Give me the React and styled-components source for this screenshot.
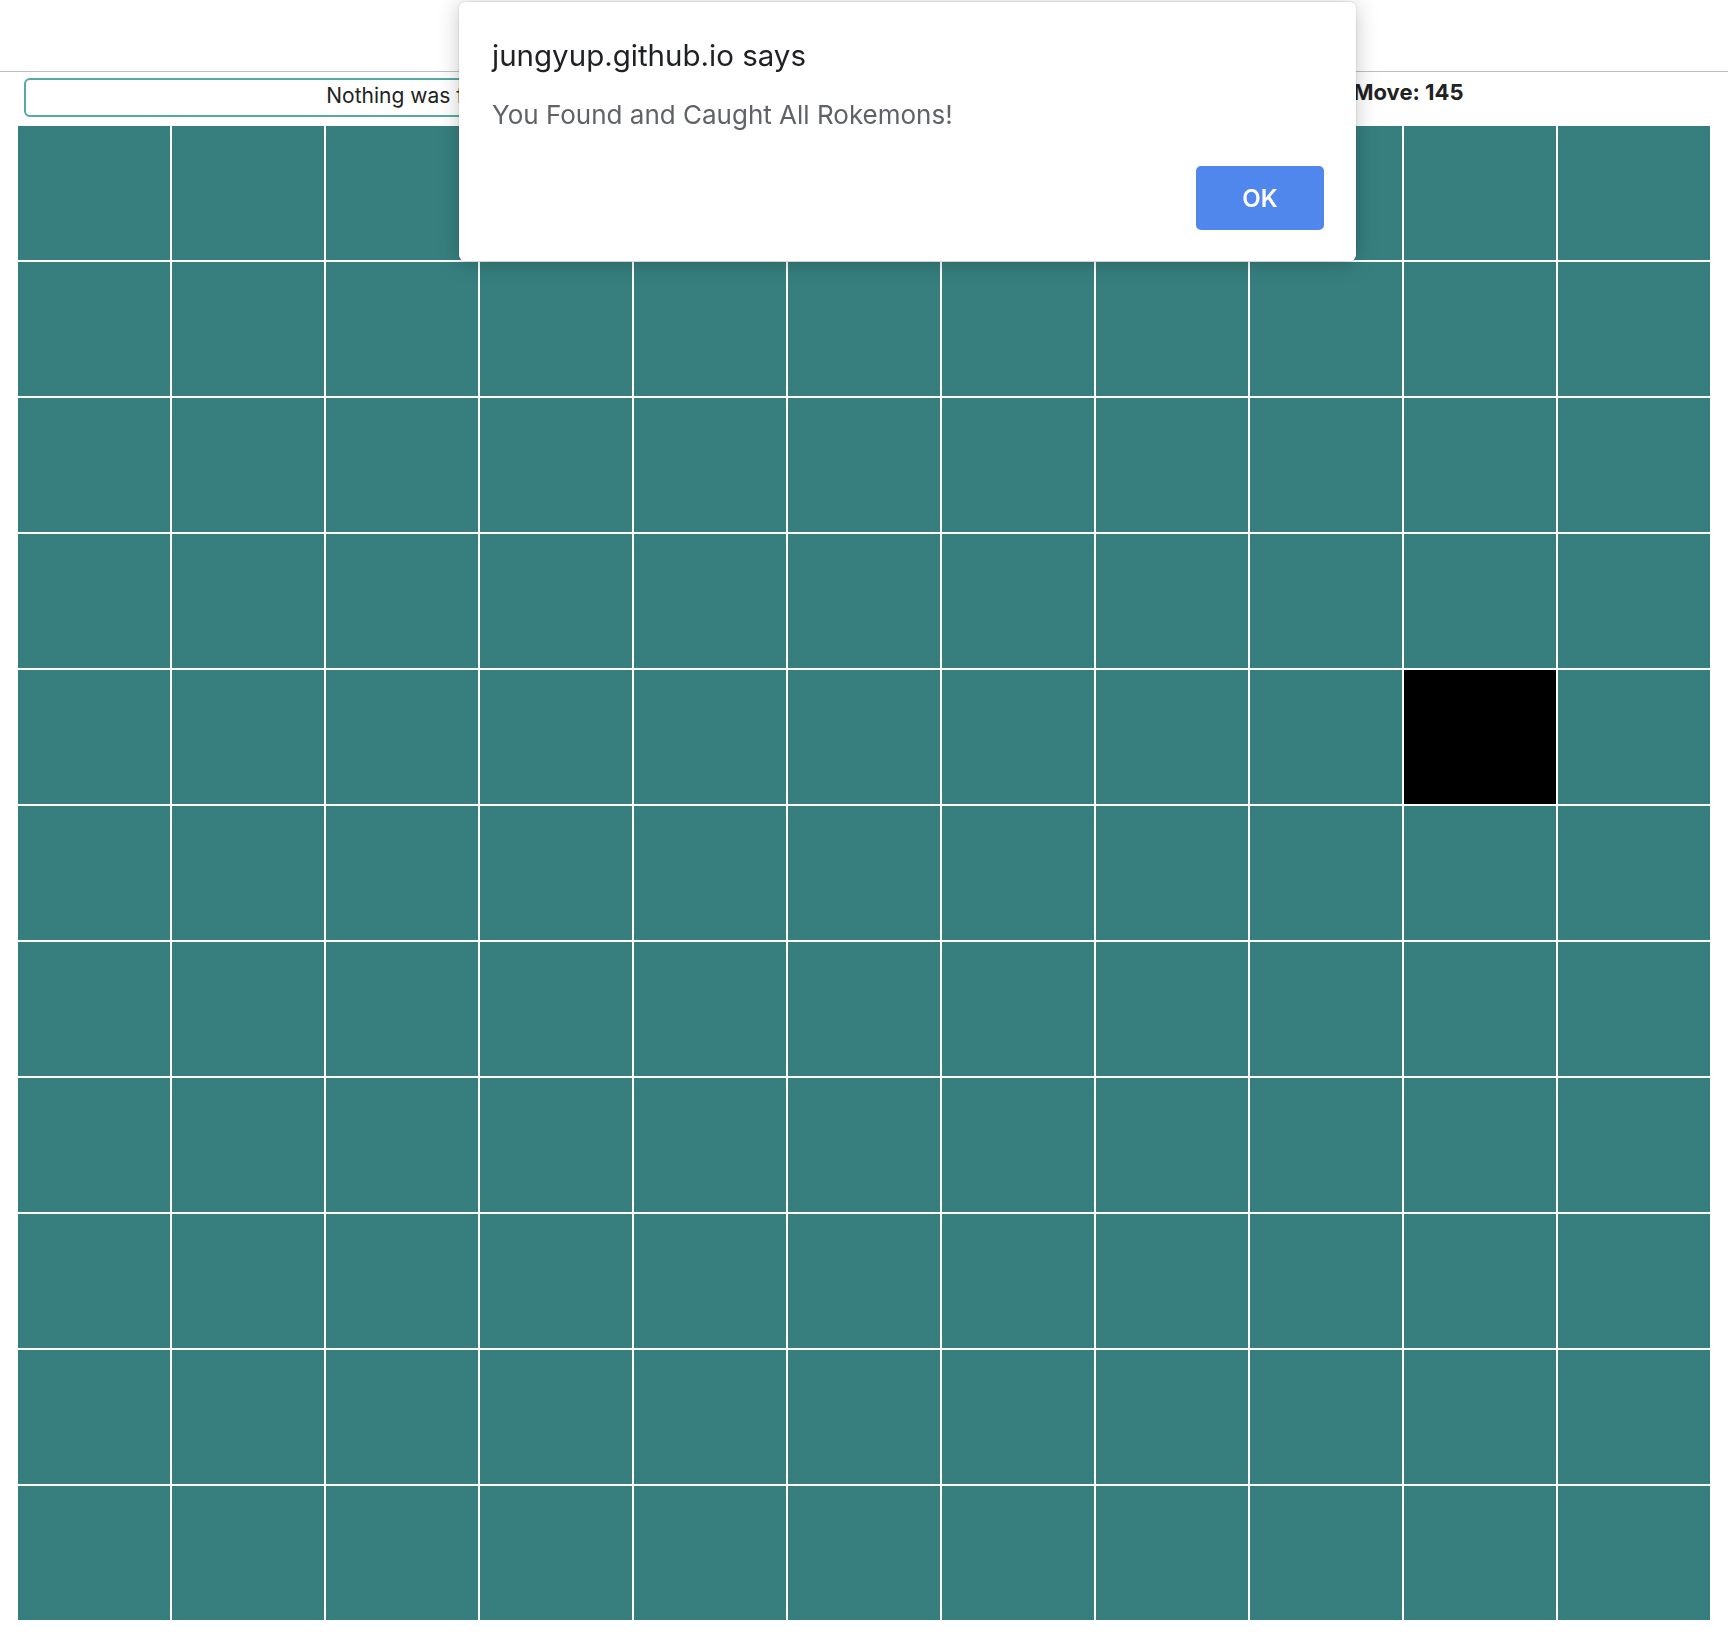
import React from "react";
import styled, { createGlobalStyle } from "styled-components";

const ROWS = 11;
const COLS = 11;
const player = { row: 4, col: 9 };

const GlobalStyle = createGlobalStyle`
    body {
        margin: 0;
        background: #fff;
        font-family: Inter, "Noto Sans", "Liberation Sans", sans-serif;
        color: #222;
    }
`;

const Chrome = styled.div`
    height: 71px;
    border-bottom: 1px solid #bfbfbf;
    background: #fff;
`;

const Page = styled.div`
    padding: 6px 18px 0 18px;
`;

const StatusBar = styled.div`
    display: flex;
    align-items: flex-start;
    height: 39px;
    padding-left: 6px;
    margin-bottom: 9px;
`;

const Message = styled.input`
    box-sizing: border-box;
    width: 792px;
    height: 39px;
    padding: 0 0 5px 0;
    border: 2px solid #53aba2;
    border-radius: 6px;
    text-align: center;
    font-family: inherit;
    font-size: 21px;
    color: #222;
    background: #fff;
    outline: none;
`;

const Move = styled.div`
    margin: 1px 0 0 537px;
    font-size: 22px;
    line-height: 26px;
    font-weight: 700;
    color: #222;
`;

const Board = styled.div`
    display: grid;
    grid-template-columns: repeat(${COLS}, 152px);
    grid-auto-rows: 134px;
    gap: 2px;
    width: max-content;
`;

const Cell = styled.div`
    background: ${(props) => (props.active ? "#000" : "#377f7f")};
`;

const Dialog = styled.div`
    position: fixed;
    top: 2px;
    left: 459px;
    width: 897px;
    height: 259px;
    box-sizing: border-box;
    padding: 36px 32px 31px 33px;
    background: #fff;
    border-radius: 6px;
    box-shadow: 0 2px 22px rgba(0, 0, 0, 0.22), 0 0 0 1px rgba(0, 0, 0, 0.06);
    display: flex;
    flex-direction: column;
`;

const Title = styled.div`
    font-size: 29.5px;
    line-height: 34px;
    color: #202124;
`;

const Text = styled.div`
    margin-top: 27px;
    font-size: 26px;
    line-height: 32px;
    color: #5f6368;
`;

const Actions = styled.div`
    margin-top: auto;
    display: flex;
    justify-content: flex-end;
`;

const OkButton = styled.button`
    width: 128px;
    height: 64px;
    border: none;
    border-radius: 5px;
    background: #5087ec;
    color: #fff;
    font-family: inherit;
    font-size: 24px;
    font-weight: 600;
`;

const App = () => {
    const cells = [];
    for (let r = 0; r < ROWS; r++) {
        for (let c = 0; c < COLS; c++) {
            cells.push(
                <Cell key={r + "-" + c} active={r === player.row && c === player.col} />
            );
        }
    }

    return (
        <>
            <GlobalStyle />
            <Chrome />
            <Page>
                <StatusBar>
                    <Message readOnly value="Nothing was found" />
                    <Move>Move: 145</Move>
                </StatusBar>
                <Board>{cells}</Board>
            </Page>
            <Dialog>
                <Title>jungyup.github.io says</Title>
                <Text>You Found and Caught All Rokemons!</Text>
                <Actions>
                    <OkButton>OK</OkButton>
                </Actions>
            </Dialog>
        </>
    );
};

export default App;
